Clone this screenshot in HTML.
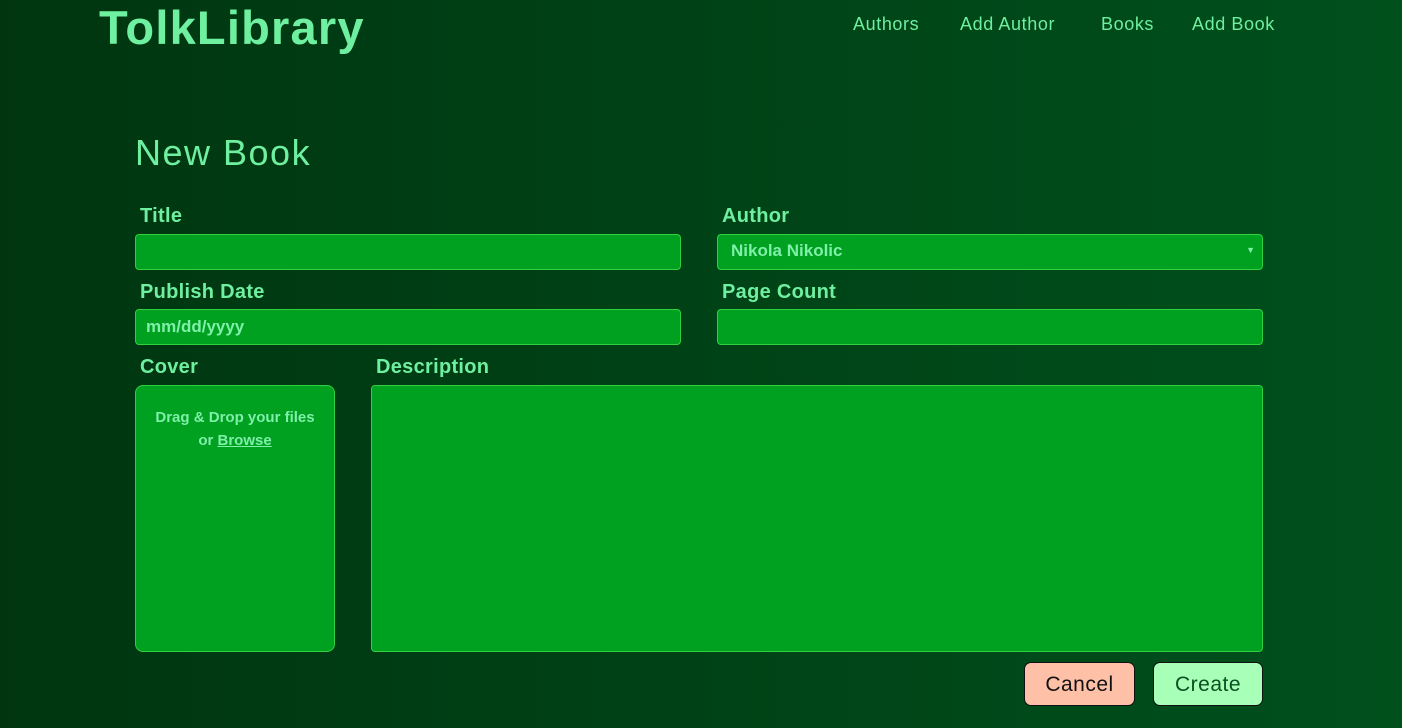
<!DOCTYPE html>
<html><head><style>
*{box-sizing:border-box;margin:0;padding:0}
body{width:1402px;height:728px;overflow:hidden;font-family:"Liberation Sans",sans-serif;background:linear-gradient(to right,#003510,#00501c);color:#6ef0a0;position:relative}
.logo{position:absolute;left:99px;top:0px;font-size:47px;font-weight:bold;color:#6ef0a0;letter-spacing:1.2px}
.nav{position:absolute;top:14px;font-size:18px;color:#6ef0a0;letter-spacing:0.6px}
h1{position:absolute;left:135px;top:132px;font-size:36px;font-weight:normal;color:#6ef0a0;letter-spacing:1.5px}
.lbl{position:absolute;font-size:20px;font-weight:bold;color:#6ef0a0;letter-spacing:0.3px}
.box{position:absolute;background:#00a020;border:1px solid #30d040;border-radius:4px;font-size:18px;color:#7ef0a8}
.btn{position:absolute;top:662px;height:44px;border:1px solid #111;border-radius:7px;font-size:21px;text-align:center;line-height:44px;letter-spacing:0.5px}
</style></head><body>
<div class="logo">TolkLibrary</div>
<div class="nav" style="left:853px">Authors</div>
<div class="nav" style="left:960px">Add Author</div>
<div class="nav" style="left:1101px">Books</div>
<div class="nav" style="left:1192px">Add Book</div>
<h1>New Book</h1>
<div class="lbl" style="left:140px;top:205px">Title</div>
<div class="lbl" style="left:722px;top:205px">Author</div>
<div class="box" style="left:135px;top:234px;width:546px;height:36px"></div>
<div class="box" style="left:717px;top:234px;width:546px;height:36px;padding:6px 13px;font-weight:bold;font-size:17px">Nikola Nikolic<span style="position:absolute;right:7px;top:10px;font-size:9px">▼</span></div>
<div class="lbl" style="left:140px;top:281px">Publish Date</div>
<div class="lbl" style="left:722px;top:281px">Page Count</div>
<div class="box" style="left:135px;top:309px;width:546px;height:36px;padding:7px 10px;font-weight:bold;font-size:17px">mm/dd/yyyy</div>
<div class="box" style="left:717px;top:309px;width:546px;height:36px"></div>
<div class="lbl" style="left:140px;top:356px">Cover</div>
<div class="lbl" style="left:376px;top:356px">Description</div>
<div class="box" style="left:135px;top:385px;width:200px;height:267px;border-radius:8px;text-align:center;font-size:15px;font-weight:bold;padding-top:20px;line-height:23px">Drag &amp; Drop your files<br>or <u>Browse</u></div>
<div class="box" style="left:371px;top:385px;width:892px;height:267px"></div>
<div class="btn" style="left:1024px;width:111px;background:#ffc0a8;color:#111">Cancel</div>
<div class="btn" style="left:1153px;width:110px;background:#a8ffb8;color:#0a5020">Create</div>
</body></html>
